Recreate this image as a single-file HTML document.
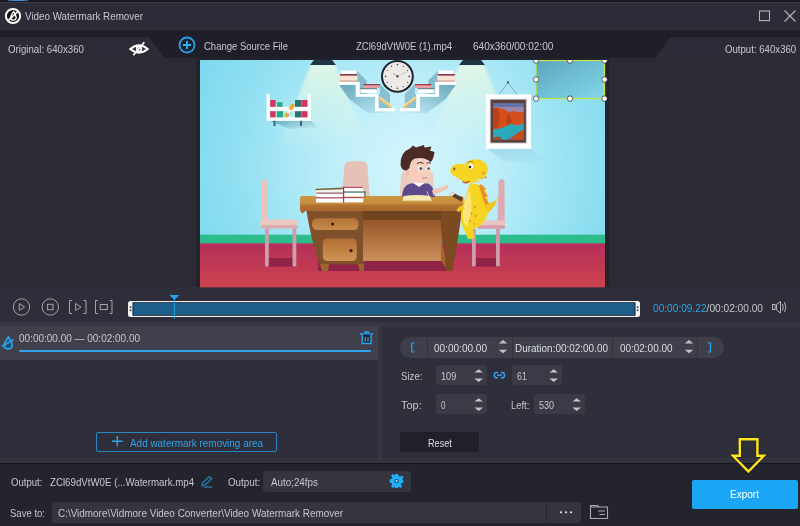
<!DOCTYPE html>
<html>
<head>
<meta charset="utf-8">
<title>Video Watermark Remover</title>
<style>
html,body{margin:0;padding:0;}
body{width:800px;height:526px;overflow:hidden;background:#2d2e38;font-family:"Liberation Sans",sans-serif;font-size:11px;color:#c6c7cf;position:relative;}
.abs{position:absolute;}
.t{position:absolute;white-space:nowrap;line-height:14px;height:14px;transform-origin:0 0;}
#topstrip{left:0;top:0;width:800px;height:3px;background:#191a21;}
#topblue{left:8px;top:0;width:20px;height:1px;background:linear-gradient(90deg,#2a5f96,#4a90d2 30%,#4a90d2 70%,#2a5f96);}
#topline{left:0;top:2px;width:800px;height:1px;background:#3a3b46;}
#titlebar{left:0;top:3px;width:800px;height:27px;background:#2b2c37;}
#header{left:0;top:30px;width:800px;height:28px;background:#1e1f28;}
#left{left:0;top:58px;width:200px;height:230px;background:#2a2b35;}
#right{left:605px;top:58px;width:195px;height:230px;background:#2a2b35;}
#videobg{left:196px;top:58px;width:413px;height:229px;background:#22232c;}
#controls{left:0;top:287px;width:800px;height:35px;background:#2d2e39;}
#band{left:0;top:322px;width:800px;height:5px;background:#353641;}
#band2{left:0;top:457px;width:800px;height:6px;background:#32333e;}
#lower{left:0;top:326.5px;width:800px;height:131px;background:#2e2f3a;}
#segrow{left:0;top:325.5px;width:377.5px;height:34px;background:#3f404c;}
#divider{left:377.5px;top:322px;width:4.5px;height:140px;background:#353641;}
#bottomline{left:0;top:462.5px;width:800px;height:1.5px;background:#14151b;}
#bottom{left:0;top:464px;width:800px;height:62px;background:#23242d;}
.box{position:absolute;background:#3a3b47;border-radius:3px;}
.bbox{position:absolute;background:#34353f;border-radius:3px;}
</style>
</head>
<body>
<div class="abs" id="topstrip"></div>
<div class="abs" id="topline"></div>
<div class="abs" id="topblue"></div>
<div class="abs" id="titlebar"></div>
<div class="abs" id="header"></div>
<div class="abs" id="left"></div>
<div class="abs" id="right"></div>
<div class="abs" id="videobg"></div>
<div class="abs" id="controls"></div>
<div class="abs" id="band"></div>
<div class="abs" id="band2"></div>
<div class="abs" id="lower"></div>
<div class="abs" id="segrow"></div>
<div class="abs" id="divider"></div>
<div class="abs" id="bottom"></div>
<div class="abs" id="bottomline"></div>

<div class="abs" style="left:19px;top:349.7px;width:352px;height:2.6px;background:#2ea3ea;border-radius:1px;"></div>

<!-- time range pill -->
<div class="abs" style="left:400px;top:336.5px;width:324px;height:21px;background:#3e3f4b;border-radius:10.5px;"></div>
<div class="abs" style="left:427px;top:336.5px;width:1px;height:21px;background:#30313b;"></div>
<div class="abs" style="left:512px;top:336.5px;width:1px;height:21px;background:#30313b;"></div>
<div class="abs" style="left:612px;top:336.5px;width:1px;height:21px;background:#30313b;"></div>
<div class="abs" style="left:697px;top:336.5px;width:1px;height:21px;background:#30313b;"></div>

<div class="box" style="left:436px;top:365px;width:51px;height:20px;"></div>
<div class="box" style="left:512px;top:365px;width:50px;height:20px;"></div>
<div class="box" style="left:436px;top:394px;width:51px;height:20px;"></div>
<div class="box" style="left:534px;top:394px;width:51px;height:20px;"></div>

<div class="abs" style="left:400px;top:432px;width:79px;height:20px;background:#1f2028;"></div>
<div class="abs" style="left:96px;top:432px;width:179px;height:18px;border:1px solid #2c86c4;border-radius:2px;"></div>

<div class="bbox" style="left:263px;top:471px;width:148px;height:21px;"></div>
<div class="bbox" style="left:52px;top:502px;width:494px;height:21px;border-radius:3px 0 0 3px;"></div>
<div class="bbox" style="left:547px;top:502px;width:34px;height:21px;border-radius:0 3px 3px 0;"></div>

<div class="abs" style="left:692px;top:480px;width:106px;height:29px;background:#1aa6f4;border-radius:2px;"></div>

<svg class="abs" style="left:200px;top:60px;overflow:visible;clip-path:inset(0px -6px -6px 0px);" width="405" height="227" viewBox="200 60 405 227">
<defs>
  <radialGradient id="wall" gradientUnits="userSpaceOnUse" cx="412" cy="165" r="230">
    <stop offset="0" stop-color="#d6f5fc"/>
    <stop offset="0.35" stop-color="#bdeef9"/>
    <stop offset="0.75" stop-color="#92e0f2"/>
    <stop offset="1" stop-color="#7fd9ee"/>
  </radialGradient>
  <linearGradient id="floor" x1="0" y1="243" x2="0" y2="287" gradientUnits="userSpaceOnUse">
    <stop offset="0" stop-color="#b42f5b"/>
    <stop offset="1" stop-color="#cc434c"/>
  </linearGradient>
  <linearGradient id="cone" x1="0" y1="65" x2="0" y2="150" gradientUnits="userSpaceOnUse">
    <stop offset="0" stop-color="#e2f7e6" stop-opacity="0.95"/>
    <stop offset="1" stop-color="#e4f8e8" stop-opacity="0"/>
  </linearGradient>
  <linearGradient id="shad" x1="0" y1="0" x2="1" y2="1">
    <stop offset="0" stop-color="#4f8fa4" stop-opacity="0.75"/>
    <stop offset="1" stop-color="#4f8fa4" stop-opacity="0"/>
  </linearGradient>
  <linearGradient id="shadL" x1="1" y1="0" x2="0" y2="1">
    <stop offset="0" stop-color="#4f8fa4" stop-opacity="0.75"/>
    <stop offset="1" stop-color="#4f8fa4" stop-opacity="0"/>
  </linearGradient>
  <linearGradient id="panel" x1="0" y1="221" x2="0" y2="261" gradientUnits="userSpaceOnUse">
    <stop offset="0" stop-color="#96572a"/>
    <stop offset="1" stop-color="#cc8f58"/>
  </linearGradient>
  <linearGradient id="desktop" x1="0" y1="196" x2="0" y2="211" gradientUnits="userSpaceOnUse">
    <stop offset="0" stop-color="#cd963f"/>
    <stop offset="0.52" stop-color="#c48b3a"/>
    <stop offset="0.62" stop-color="#b27230"/>
    <stop offset="1" stop-color="#a5672c"/>
  </linearGradient>
  <linearGradient id="sel" x1="0" y1="0" x2="1" y2="1">
    <stop offset="0" stop-color="#5aa6bc"/>
    <stop offset="0.6" stop-color="#74c4d9"/>
    <stop offset="1" stop-color="#86d6e9"/>
  </linearGradient>
  <linearGradient id="drw1" x1="0" y1="0" x2="0" y2="1"><stop offset="0" stop-color="#b37238"/><stop offset="1" stop-color="#c98b4a"/></linearGradient>
  <linearGradient id="drw2" x1="0" y1="0" x2="0" y2="1"><stop offset="0" stop-color="#b06e35"/><stop offset="1" stop-color="#cf9353"/></linearGradient>
  <filter id="b1" x="-20%" y="-20%" width="140%" height="140%"><feGaussianBlur stdDeviation="0.6"/></filter>
  <filter id="b3" x="-20%" y="-20%" width="140%" height="140%"><feGaussianBlur stdDeviation="1.1"/></filter>
  <filter id="b2" x="-20%" y="-20%" width="140%" height="140%"><feGaussianBlur stdDeviation="2"/></filter>
</defs>
<rect x="200" y="60" width="405" height="227" fill="url(#wall)"/>
<!-- light cones -->
<path d="M311 64 L335 64 L369 150 L277 150 Z" fill="url(#cone)" filter="url(#b3)"/>
<path d="M460 64 L484 64 L518 150 L426 150 Z" fill="url(#cone)" filter="url(#b3)"/>
<!-- lamps -->
<path d="M314 60 H332 L336 65 H310 Z" fill="#1f3644"/>
<path d="M463 60 H481 L485 65 H459 Z" fill="#1f3644"/>

<!-- small shelf -->
<path d="M270 121 H311 L318 127.5 L290 129 Z" fill="url(#shad)" opacity="0.85"/>
<rect x="273.5" y="120" width="2" height="6" fill="#3c6476"/>
<rect x="300" y="120" width="2" height="6" fill="#3c6476"/>
<path d="M266.5 94 H269.8 V117.3 H307.5 V94 H310.8 V120.8 H266.5 Z" fill="#fff"/>
<rect x="269" y="106.8" width="39" height="4.4" fill="#fff"/>
<rect x="270.2" y="100" width="5.4" height="6.8" fill="#d8335e"/>
<rect x="277" y="102.3" width="5.5" height="4.5" fill="#27a97f"/>
<rect x="295" y="100" width="6.5" height="6.8" fill="#2a7566"/>
<rect x="301.5" y="100" width="6" height="6.8" fill="#d8335e"/>
<rect x="270.2" y="111.2" width="5.4" height="6.2" fill="#d8335e"/>
<rect x="277" y="111.2" width="6" height="6.2" fill="#27a97f"/>
<rect x="295" y="111.2" width="6.5" height="6.2" fill="#2a7566"/>
<rect x="301.5" y="111.2" width="6" height="6.2" fill="#d8335e"/>
<path d="M284 116.5 L292 103 L295 105 L287.5 117.4 Z" fill="#f0a62c"/>
<path d="M286.5 112.5 L288.8 108.6 L291.6 110.4 L289.3 114.3 Z" fill="#fff"/>

<!-- stair shelves: shadows -->
<g>
<path d="M339 84.8 H356 V96.8 H375 V111.3 H395 L396 113 L368 113 L349 99 Z" fill="url(#shad)"/>
<path d="M357 71 L366.5 80.5 V94 H359.6 V82 H357 Z" fill="#5f9bb0" opacity="0.6"/>
<path d="M380 84 L390 94 V108.2 H378.5 V94 H380 Z" fill="#5f9bb0" opacity="0.55"/>
<path d="M338.5 82 H359.6 V94 H378.5 V108.2 H395 V111.3 H375 V96.8 H355.7 V84.8 H338.5 Z" fill="#fff"/>
</g>
<g transform="translate(794.8 0) scale(-1 1)">
<path d="M339 84.8 H356 V96.8 H375 V111.3 H395 L396 113 L368 113 L349 99 Z" fill="url(#shad)"/>
<path d="M357 71 L366.5 80.5 V94 H359.6 V82 H357 Z" fill="#5f9bb0" opacity="0.6"/>
<path d="M380 84 L390 94 V108.2 H378.5 V94 H380 Z" fill="#5f9bb0" opacity="0.55"/>
<path d="M338.5 82 H359.6 V94 H378.5 V108.2 H395 V111.3 H375 V96.8 H355.7 V84.8 H338.5 Z" fill="#fff"/>
</g>
<!-- books left top -->
<rect x="341" y="70.6" width="15.5" height="3.4" fill="#fff"/>
<rect x="340" y="74" width="17" height="1.8" fill="#8e3a45"/>
<rect x="340" y="75.8" width="17.5" height="5" fill="#fbe3d2"/>
<rect x="340" y="80.3" width="17.5" height="1.3" fill="#e9a58a"/>
<!-- books left 2nd -->
<rect x="363.5" y="84" width="16.5" height="4" fill="#e9a0a8"/>
<rect x="363.5" y="84" width="16.5" height="1.3" fill="#9a3d4d"/>
<rect x="360.5" y="89" width="16" height="4" fill="#fff"/>
<rect x="360.5" y="88.2" width="16.5" height="1" fill="#5a6f78"/>
<!-- leaning book left -->
<path d="M378 98.5 L380 96.5 L392.5 106 L390.5 108.2 Z" fill="#f7e3a1"/>
<path d="M378 98.5 L379 97.5 L391.5 107.1 L390.5 108.2 Z" fill="#e8b96a"/>
<!-- books right top -->
<rect x="438.3" y="70.6" width="15.5" height="3.4" fill="#fff"/>
<rect x="437.8" y="74" width="17" height="1.8" fill="#8e3a45"/>
<rect x="437.3" y="75.8" width="17.5" height="5" fill="#fbe3d2"/>
<rect x="437.3" y="80.3" width="17.5" height="1.3" fill="#e9a58a"/>
<!-- books right 2nd -->
<rect x="414.8" y="84" width="16.5" height="4" fill="#e9a0a8"/>
<rect x="414.8" y="84" width="16.5" height="1.3" fill="#9a3d4d"/>
<rect x="418.3" y="89" width="16" height="4" fill="#fff"/>
<rect x="417.8" y="88.2" width="16.5" height="1" fill="#5a6f78"/>
<path d="M416.8 98.5 L414.8 96.5 L402.3 106 L404.3 108.2 Z" fill="#f7e3a1"/>
<path d="M416.8 98.5 L415.8 97.5 L403.3 107.1 L404.3 108.2 Z" fill="#e8b96a"/>

<!-- clock -->
<circle cx="397.4" cy="76.4" r="15.4" fill="#ede9e6" stroke="#1d2530" stroke-width="2"/>
<g fill="#3a3f48">
<circle cx="397.4" cy="64.6" r="0.8"/><circle cx="397.4" cy="88.2" r="0.8"/><circle cx="385.6" cy="76.4" r="0.8"/><circle cx="409.2" cy="76.4" r="0.8"/>
<circle cx="403.3" cy="66.2" r="0.6"/><circle cx="407.6" cy="70.5" r="0.6"/><circle cx="407.6" cy="82.3" r="0.6"/><circle cx="403.3" cy="86.6" r="0.6"/>
<circle cx="391.5" cy="66.2" r="0.6"/><circle cx="387.2" cy="70.5" r="0.6"/><circle cx="387.2" cy="82.3" r="0.6"/><circle cx="391.5" cy="86.6" r="0.6"/>
</g>
<path d="M397.4 76.4 L408 71.3" stroke="#c9c4c2" stroke-width="0.9"/>
<path d="M397.4 76.4 L393 73.6" stroke="#b5b0ae" stroke-width="1.1"/>
<circle cx="397.4" cy="76.4" r="1.1" fill="#2a2f38"/>

<!-- picture -->
<path d="M488 149 H531 L545 162 L504 162 Z" fill="url(#shad)" opacity="0.3"/>
<path d="M498.8 95 L508 82.5 L517.2 95" fill="none" stroke="#6b8b98" stroke-width="0.7"/>
<circle cx="508" cy="82.3" r="1.1" fill="#34424c"/>
<rect x="486" y="94.4" width="45" height="54.4" fill="#fff"/>
<rect x="489.8" y="98.8" width="37" height="44.6" fill="#8d8590" opacity="0.55" filter="url(#b1)"/>
<rect x="490.8" y="99.8" width="35" height="42.8" fill="#5c3f3a" filter="url(#b1)"/>
<g filter="url(#b1)">
<rect x="493.2" y="103.2" width="30.4" height="36.6" fill="#6573ac"/>
<rect x="493.2" y="107" width="30.4" height="5" fill="#9d86ac"/>
<path d="M493.2 109 L499 107.5 L504 109.5 L509 112 L514 111 L519 112.5 L523.6 111.5 V129 L493.2 129 Z" fill="#d4501f"/>
<path d="M493.2 108 L497 107.5 L500 114 L498 127 L493.2 129 Z" fill="#b9431c"/>
<path d="M508 112 L512 120 L510 127 L506 122 Z" fill="#b9431c"/>
<path d="M493.2 130 L503 127.5 L511 124 L518 125.5 L523.6 123 V131 L512 137 L505 139.8 H493.2 Z" fill="#2ba9ba"/>
<path d="M509 139.8 L516 134 L523.6 129.5 V139.8 Z" fill="#c8481f"/>
<path d="M493.2 137.5 L499 136.5 L503 139.8 H493.2 Z" fill="#a94524"/>
</g>

<!-- floor -->
<rect x="200" y="234.7" width="405" height="9" fill="#2cbd8d"/>
<rect x="200" y="243.3" width="405" height="44" fill="url(#floor)"/>

<!-- left chair -->
<rect x="266" y="258" width="30" height="8.5" fill="#8f2348"/>
<path d="M261.2 181 Q264 177 266.8 181 L268 221 H261 Z" fill="#e7c3ba"/>
<path d="M260.5 222 Q260.5 219.5 263 219.5 H295 Q298 219.5 298 223 V225 Q298 228.5 295 228.5 H263 Q260.5 228.5 260.5 226 Z" fill="#ecc9c0"/>
<rect x="261" y="225" width="37" height="3.5" rx="1.5" fill="#d9aeb0"/>
<rect x="265" y="228.5" width="3.8" height="38" fill="#d09bab"/>
<rect x="292.5" y="228.5" width="3.8" height="38" fill="#d09bab"/>

<!-- right chair -->
<rect x="474" y="258" width="25" height="8.5" fill="#8f2348"/>
<path d="M498.6 181 Q501.5 177 504.5 181 L504.8 222 H497.5 Z" fill="#dcaab2"/>
<path d="M477.5 223.5 Q477.5 220.5 480.5 220.5 H502 Q505 220.5 505 223.5 V225.5 Q505 228.8 502 228.8 H480.5 Q477.5 228.8 477.5 225.5 Z" fill="#e9c4c2"/>
<rect x="477.5" y="225.3" width="27.5" height="3.5" rx="1.5" fill="#d3a0ac"/>
<rect x="472" y="228.8" width="3.8" height="37.5" fill="#d09bab"/>
<rect x="496" y="228.8" width="3.8" height="37.5" fill="#d09bab"/>

<!-- chair behind desk -->
<path d="M341.3 198 L344.5 166 Q345 161.3 350 161.3 H362 Q367 161.3 367.3 166 L369.8 198 Z" fill="#e5c2b8"/>
<!-- boy chair -->
<path d="M399.5 198 L401 176 Q401.5 171 406 171 H428 Q433 171 433 176 L434 198 Z" fill="#e9cdbf"/>

<!-- desk shadow -->
<rect x="318" y="260" width="128" height="11" fill="#8f2348"/>
<!-- desk body -->
<path d="M306.5 211 H364 V264.5 H319.5 Q311 240 306.5 211 Z" fill="#80502a"/>
<rect x="363" y="210.5" width="80" height="10" fill="#70431f"/>
<rect x="363" y="220" width="78.5" height="41" fill="url(#panel)"/>
<rect x="312" y="218.3" width="46.5" height="11.8" rx="5" fill="url(#drw1)"/>
<rect x="322.8" y="238.4" width="34" height="22.6" rx="4.5" fill="url(#drw2)"/>
<circle cx="332.6" cy="224" r="1.5" fill="#3a1418"/>
<circle cx="351" cy="250.6" r="1.6" fill="#3a1418"/>
<path d="M320 264 H329 L328 271 H322 Z" fill="#9c642e"/>
<path d="M358 264 H364 V271 H359.5 Z" fill="#9c642e"/>
<path d="M441 211 H462 Q458 240 452.5 270.8 H445.5 Q447 262 444 250 Q440 235 441 211 Z" fill="#7c4a21"/>
<path d="M441 221 Q440 240 444 252 Q446 262 445.5 268 L441.5 261 Z" fill="#a4662e"/>
<!-- desk top -->
<path d="M302 196 H461 Q463.5 196 463.5 198.5 V208.5 Q463.5 211 461 211 H305 L303 213.5 Q300 212.5 300 208.5 V198.5 Q300 196 302 196 Z" fill="url(#desktop)"/>

<!-- books on desk -->
<rect x="316" y="188.6" width="27.5" height="4.2" fill="#f6f2ea"/>
<path d="M315.5 188.8 L343.5 187.6 V189.2 L315.5 190.2 Z" fill="#6f6a45"/>
<rect x="316.5" y="193.2" width="27.5" height="4.4" fill="#fff"/>
<rect x="316.5" y="192.6" width="27.5" height="1" fill="#9b3246"/>
<rect x="316" y="198" width="28" height="4.6" fill="#fff"/>
<rect x="316" y="197.4" width="28" height="1" fill="#9b3246"/>
<rect x="343.8" y="187.4" width="19" height="4" fill="#fff"/>
<rect x="343.8" y="186.8" width="19" height="1.1" fill="#c2405a"/>
<rect x="344" y="192.4" width="21" height="4.2" fill="#fff"/>
<rect x="344" y="191.5" width="21.5" height="1.1" fill="#3d6f66"/>
<rect x="364.2" y="191.5" width="1.3" height="5.4" fill="#3d6f66"/>
<rect x="343.8" y="198" width="19.5" height="4.4" fill="#fff"/>
<rect x="343.8" y="197" width="19.5" height="1.1" fill="#c2405a"/>
<rect x="343" y="186.8" width="1.2" height="15.8" fill="#b03050"/>

<!-- boy -->
<path d="M402 197 Q402 186 410 183.5 L428 183.5 Q434 186 435 197 Z" fill="#5c4a8c"/>
<path d="M432 190 L444.5 186.5 L447.5 184.5 L449 186.5 L446 189.5 L433.5 195.5 Z" fill="#f3c2b0"/>
<path d="M414 183.5 L419 187 L424 183.5 L422 181 H416 Z" fill="#fff"/>
<ellipse cx="419.5" cy="170.5" rx="11.2" ry="12.6" fill="#f8cdbc"/>
<ellipse cx="407.5" cy="172.5" rx="2.2" ry="3.2" fill="#f3bfae"/>
<path d="M400.5 165 Q400 152 410 148.5 L413 145.5 L416 147.5 L424 145 L424.5 147.5 L431.5 146.5 L430 150.5 L434.5 152 Q433.5 160 430.5 162 Q424 156.5 415 158.5 Q410 160.5 409.5 168 L406.5 170.5 Q401.5 170.5 400.5 165 Z" fill="#4b2b24"/>
<ellipse cx="420.3" cy="168.3" rx="2.3" ry="2.5" fill="#fff"/>
<ellipse cx="428.3" cy="168.3" rx="1.9" ry="2.4" fill="#fff"/>
<circle cx="420.8" cy="168.6" r="1.5" fill="#3c5a66"/>
<circle cx="428.6" cy="168.6" r="1.4" fill="#3c5a66"/>
<path d="M417 163.5 Q420 161.5 423.5 163.3" stroke="#4b2b24" stroke-width="1" fill="none"/>
<path d="M426.5 163.3 Q428.5 162 431 163.3" stroke="#4b2b24" stroke-width="1" fill="none"/>
<path d="M422 177.8 Q424.5 178.8 427 177.5" stroke="#b5705f" stroke-width="0.8" fill="none"/>
<!-- paper -->
<path d="M403.5 196 Q417 194 430 196 L431.5 200.8 H402.5 Z" fill="#f6eab0"/>
<path d="M402.5 200 H431.5 V201.3 H402.5 Z" fill="#e3cf86"/>
<path d="M427 191.5 L429 196.5" stroke="#d8c9a8" stroke-width="1"/>

<!-- tablet/book on desk right -->
<path d="M449.5 195 L452.5 192.3 L463 198 L461.5 201.5 Z" fill="#5a3a30"/>
<path d="M449.5 195 L452.5 192.3 L455 193.6 L452 196.5 Z" fill="#e8ddd8"/>

<!-- dino -->
<path d="M486 203 Q492 204 497.5 198.5 Q495 208 487 213.5 Z" fill="#f3c51c"/>
<path d="M470 183 Q466 196 462.5 206 Q459 218 463 228 L468 238.5 Q472 240 474.5 237.5 L473 229 Q485 226 488.5 212 Q489 198 484 186 Z" fill="#f6d422"/>
<path d="M469 190 Q463 203 462.8 214 Q463 224 467 226 Q472 215 471.5 203 Q471 195 469 190 Z" fill="#f9e678"/>
<path d="M481 184 L486 189 L483.5 190.5 L488 196 L485 197 L489 203.5 L486 204.5 L488.5 211 Q484 204 482 196 Q480.5 190 479 186 Z" fill="#e98f2c"/>
<path d="M462 205 Q458 207 456.5 211 L459.5 212 Q461 209 464 208.5 Z" fill="#f0c41c"/>
<ellipse cx="475.5" cy="169.5" rx="12.4" ry="10.3" fill="#f6d422"/>
<ellipse cx="459.5" cy="170.5" rx="9.3" ry="6.8" fill="#f6d422"/>
<path d="M455 176 Q466 186 480 181 Q472 179 466 176 Z" fill="#f6d422"/>
<path d="M462.5 181.8 Q466 183.2 469.5 181.5" stroke="#7a3b18" stroke-width="1" fill="none"/>
<path d="M463 182 Q466 185 469 182 Z" fill="#d9541e"/>
<ellipse cx="470.8" cy="166.3" rx="2.2" ry="2.8" fill="#fff" transform="rotate(-20 470.8 166.3)"/>
<circle cx="470" cy="167" r="1.3" fill="#3b2418"/>
<ellipse cx="454.3" cy="169" rx="1.1" ry="1.4" fill="#9a5a18"/>
<path d="M467 162.5 Q470 160.5 473.5 162" stroke="#b9781a" stroke-width="0.9" fill="none"/>
<circle cx="483.5" cy="173" r="1.6" fill="#ea9a2c"/><circle cx="485.5" cy="177.5" r="1.3" fill="#ea9a2c"/><circle cx="482" cy="178.5" r="1" fill="#ea9a2c"/>
<circle cx="475" cy="207" r="0.9" fill="#e08a24"/><circle cx="471.5" cy="213.5" r="0.9" fill="#e08a24"/><circle cx="475.5" cy="216" r="0.9" fill="#e08a24"/><circle cx="470" cy="221" r="0.9" fill="#e08a24"/><circle cx="474" cy="224" r="0.8" fill="#e08a24"/>

<!-- selection box -->
<rect x="536" y="60" width="68.5" height="38.6" fill="url(#sel)"/>
<rect x="536" y="60.5" width="68.5" height="38.1" fill="none" stroke="#c6e44c" stroke-width="1.3"/>
<g fill="#fff" stroke="#2a2a2a" stroke-width="0.7">
<circle cx="536" cy="60.5" r="2.7"/><circle cx="570" cy="60.5" r="2.7"/><circle cx="604.5" cy="60.5" r="2.7"/>
<circle cx="536" cy="79.5" r="2.7"/><circle cx="604.5" cy="79.5" r="2.7"/>
<circle cx="536" cy="98.6" r="2.7"/><circle cx="570" cy="98.6" r="2.7"/><circle cx="604.5" cy="98.6" r="2.7"/>
</g>
</svg>


<!-- chrome icons overlay -->
<svg class="abs" style="left:0;top:0" width="800" height="526" viewBox="0 0 800 526" fill="none">
  <!-- header tabs -->
  <path d="M0 37 H149 L165 58 H0 Z" fill="#2b2c37"/>
  <path d="M800 37 H670 L655 58 H800 Z" fill="#2b2c37"/>
  <!-- title icon -->
  <circle cx="13" cy="16" r="7.1" fill="#121318" stroke="#fff" stroke-width="2"/>
  <path d="M13.6 11.6 Q10.6 15.8 10.7 17.8 Q11 20.2 13.5 20.2 Q16 20.2 16.2 17.8 Q16.2 15.8 13.6 11.6 Z" stroke="#fff" stroke-width="1.3"/>
  <path d="M7.8 20.8 L18.4 11" stroke="#fff" stroke-width="1.6"/>
  <!-- window buttons -->
  <rect x="759.5" y="11" width="10" height="9.6" stroke="#b4b5bd" stroke-width="1.1"/>
  <path d="M784.5 10.5 L795.5 21.5 M795.5 10.5 L784.5 21.5" stroke="#b4b5bd" stroke-width="1.1"/>
  <!-- eye icon -->
  <path d="M130.3 49 Q139 41.8 147.7 49 Q139 56.2 130.3 49 Z" stroke="#fff" stroke-width="2"/>
  <circle cx="139" cy="49" r="2.3" stroke="#fff" stroke-width="1.7"/>
  <path d="M133.3 55.3 L144.3 42.3" stroke="#fff" stroke-width="1.7"/>
  <!-- plus circle -->
  <circle cx="187" cy="45" r="7.5" fill="#16222e" stroke="#2a9fe6" stroke-width="1.8"/>
  <path d="M183 45 H191 M187 41 V49" stroke="#2fb2f5" stroke-width="1.8"/>
  <!-- play controls -->
  <g stroke="#a3a4ae" stroke-width="1">
  <circle cx="21.5" cy="307" r="8.2"/>
  <path d="M19.3 303.5 L24.6 307 L19.3 310.5 Z"/>
  <circle cx="50.3" cy="307" r="8.2"/>
  <rect x="47.6" y="304.3" width="5.4" height="5.4"/>
  <path d="M72 300.5 H69.5 V313.5 H72 M83.5 300.5 H86 V313.5 H83.5"/>
  <path d="M75.6 303.5 L81 307 L75.6 310.5 Z"/>
  <path d="M98 300.5 H95.5 V313.5 H98 M109.5 300.5 H112 V313.5 H109.5"/>
  <rect x="100.3" y="304.5" width="7" height="5"/>
  </g>
  <!-- timeline -->
  <rect x="128" y="301" width="512" height="16" rx="2.5" fill="#f2f2f4"/>
  <rect x="132.5" y="302.2" width="503" height="13.6" fill="#0d1a24"/>
  <rect x="133.5" y="303" width="501" height="12" fill="#1d5f88"/>
  <rect x="129.8" y="306.5" width="1.6" height="1.6" fill="#333"/><rect x="129.8" y="309.5" width="1.6" height="1.6" fill="#333"/>
  <rect x="636.8" y="306.5" width="1.6" height="1.6" fill="#333"/><rect x="636.8" y="309.5" width="1.6" height="1.6" fill="#333"/>
  <path d="M169.4 295 H179.4 L174.4 300 Z" fill="#2aa0e6"/>
  <path d="M174.4 299 V319" stroke="#2aa0e6" stroke-width="1"/>
  <!-- volume -->
  <g stroke="#b4b5bd" stroke-width="1">
  <rect x="772.5" y="304.5" width="2.6" height="5"/>
  <path d="M776.5 304.5 L780.5 301.5 V313 L776.5 310 Z"/>
  <path d="M782.5 304 Q784 307.2 782.5 310.5 M784.5 302.3 Q787.2 307.2 784.5 312.2"/>
  </g>
  <!-- watermark segment icon -->
  <path d="M8.4 337 Q4 343 4.2 345.6 Q4.6 348.8 8.2 348.8 Q11.8 348.8 12.2 345.6 Q12.3 343 8.4 337 Z" stroke="#2ea3ea" stroke-width="1.7" fill="#1d4a6c"/>
  <path d="M1.8 346.5 L13.6 339.5" stroke="#2ea3ea" stroke-width="1.6"/>
  <!-- trash -->
  <g stroke="#2ea3ea" stroke-width="1.5">
  <path d="M360 334 H373"/>
  <path d="M365 333.6 V332 H368.3 V333.6"/>
  <path d="M362.3 334.5 V343.6 H371 V334.5" fill="#17293a"/>
  </g>
  <path d="M365.2 337 V341.5 M368 337 V341.5" stroke="#9fb9c9" stroke-width="0.9"/>
  <!-- brackets -->
  <path d="M414.5 343 H411.8 V352 H414.5" stroke="#2ea3ea" stroke-width="1.2"/>
  <path d="M707.8 343 H710.5 V352 H707.8" stroke="#2ea3ea" stroke-width="1.2"/>
  <!-- spinners -->
  <g fill="#c3c4cc">
  <path d="M498.7 343.5 H507.3 L503 340 Z M498.7 349.8 H507.3 L503 353.3 Z"/>
  <path d="M684.7 343.5 H693.3 L689 340 Z M684.7 349.8 H693.3 L689 353.3 Z"/>
  <path d="M474.4 372.6 H483 L478.7 369.2 Z M474.4 378.6 H483 L478.7 382 Z"/>
  <path d="M549.4 372.6 H558 L553.7 369.2 Z M549.4 378.6 H558 L553.7 382 Z"/>
  <path d="M474.4 401.6 H483 L478.7 398.2 Z M474.4 407.6 H483 L478.7 411 Z"/>
  <path d="M572.4 401.6 H581 L576.7 398.2 Z M572.4 407.6 H581 L576.7 411 Z"/>
  </g>
  <!-- link icon -->
  <g stroke="#2ea3ea" stroke-width="1.5">
  <path d="M498 372.6 H496.6 Q494.3 372.6 494.3 375.2 Q494.3 377.8 496.6 377.8 H498"/>
  <path d="M500.8 372.6 H502.2 Q504.5 372.6 504.5 375.2 Q504.5 377.8 502.2 377.8 H500.8"/>
  <path d="M497 375.2 H502"/>
  </g>
  <!-- add plus -->
  <path d="M112 441.3 H122.6 M117.3 436 V446.6" stroke="#2ea3ea" stroke-width="1.5"/>
  <!-- pencil -->
  <g stroke="#2a86b8" stroke-width="1.2">
  <path d="M202 485.5 L202.8 482.6 L209.3 476.6 L211.6 478.8 L205 485 Z"/>
  <path d="M203.5 487 H212.3"/>
  </g>
  <!-- gear -->
  <g transform="translate(396.6 481)">
  <path d="M-1.5 -7 H1.5 L2 -5 L3.6 -4.3 L5.4 -5.6 L7 -3.8 L5.6 -2 L6.3 -0.6 L6.9 0 L6.9 1.5 L5 2 L4.3 3.6 L5.6 5.4 L3.8 7 L2 5.6 L1.5 6.9 H-1.5 L-2 5.6 L-3.8 7 L-5.6 5.4 L-4.3 3.6 L-5 2 L-6.9 1.5 V-1.5 L-5 -2 L-4.3 -3.6 L-5.6 -5.4 L-3.8 -7 L-2 -5.6 Z" fill="#1fb0ff"/>
  <circle r="5.2" fill="#1fb0ff"/>
  <circle r="2.2" fill="#0f5d94"/><circle r="0.9" fill="#e8f6ff"/>
  </g>
  <!-- dots -->
  <circle cx="561" cy="512.3" r="1.1" fill="#e3e4ea"/><circle cx="566" cy="512.3" r="1.1" fill="#e3e4ea"/><circle cx="571" cy="512.3" r="1.1" fill="#e3e4ea"/>
  <!-- folder -->
  <g stroke="#a9aab3" stroke-width="1.1">
  <path d="M590.5 507 V505.5 H597.5 L599 507 H607.5 V518.5 H590.5 V507 H599"/>
  <path d="M598 511 H605 M599.5 514.5 H605"/>
  </g>
  <!-- yellow arrow -->
  <path d="M739.8 439.2 H757.4 V455.8 H763.8 L748.4 471.6 L733 455.8 H739.8 Z" stroke="#1a1b22" stroke-opacity="0.5" stroke-width="4"/>
  <path d="M739.8 439.2 H757.4 V455.8 H763.8 L748.4 471.6 L733 455.8 H739.8 Z" stroke="#ffe61e" stroke-width="2.4" stroke-linejoin="miter"/>

</svg>

<div class="t" style="left:25.0px;top:9.4px;color:#c6c7cf;transform:scaleX(0.8936);">Video Watermark Remover</div>
<div class="t" style="left:8.0px;top:41.9px;color:#c6c7cf;transform:scaleX(0.8813);">Original: 640x360</div>
<div class="t" style="left:204.0px;top:38.7px;color:#c6c7cf;transform:scaleX(0.8639);">Change Source File</div>
<div class="t" style="left:356.0px;top:38.7px;color:#c6c7cf;transform:scaleX(0.8676);">ZCl69dVtW0E (1).mp4</div>
<div class="t" style="left:473.0px;top:38.7px;color:#c6c7cf;transform:scaleX(0.9115);">640x360/00:02:00</div>
<div class="t" style="left:725.0px;top:41.9px;color:#c6c7cf;transform:scaleX(0.8753);">Output: 640x360</div>
<div class="t" style="left:653.0px;top:300.7px;color:#c6c7cf;transform:scaleX(0.9221);"><span style="color:#2ea3ea">00:00:09.22</span>/00:02:00.00</div>
<div class="t" style="left:19.0px;top:330.9px;color:#c6c7cf;transform:scaleX(0.9074);">00:00:00.00 — 00:02:00.00</div>
<div class="t" style="left:434.0px;top:340.7px;color:#dedfe5;transform:scaleX(0.9118);">00:00:00.00</div>
<div class="t" style="left:515.0px;top:340.7px;color:#dedfe5;transform:scaleX(0.9051);">Duration:00:02:00.00</div>
<div class="t" style="left:620.0px;top:340.7px;color:#dedfe5;transform:scaleX(0.9032);">00:02:00.00</div>
<div class="t" style="left:400.5px;top:369.4px;color:#c6c7cf;transform:scaleX(0.8787);">Size:</div>
<div class="t" style="left:441.0px;top:369.4px;color:#c6c7cf;transform:scaleX(0.8334);">109</div>
<div class="t" style="left:516.5px;top:369.4px;color:#c6c7cf;transform:scaleX(0.8000);">61</div>
<div class="t" style="left:400.5px;top:397.9px;color:#c6c7cf;transform:scaleX(1.0002);">Top:</div>
<div class="t" style="left:441.0px;top:397.9px;color:#c6c7cf;transform:scaleX(0.7347);">0</div>
<div class="t" style="left:510.5px;top:397.9px;color:#c6c7cf;transform:scaleX(0.8549);">Left:</div>
<div class="t" style="left:539.3px;top:397.9px;color:#c6c7cf;transform:scaleX(0.8170);">530</div>
<div class="t" style="left:427.5px;top:435.7px;color:#dedfe5;transform:scaleX(0.8278);">Reset</div>
<div class="t" style="left:130.0px;top:435.9px;color:#2ea3ea;transform:scaleX(0.9027);">Add watermark removing area</div>
<div class="t" style="left:11.0px;top:474.7px;color:#c6c7cf;transform:scaleX(0.8703);">Output:</div>
<div class="t" style="left:50.4px;top:474.7px;color:#c6c7cf;transform:scaleX(0.8819);">ZCl69dVtW0E (...Watermark.mp4</div>
<div class="t" style="left:227.6px;top:474.7px;color:#c6c7cf;transform:scaleX(0.8897);">Output:</div>
<div class="t" style="left:270.8px;top:474.7px;color:#c6c7cf;transform:scaleX(0.8917);">Auto;24fps</div>
<div class="t" style="left:10.0px;top:505.7px;color:#c6c7cf;transform:scaleX(0.8672);">Save to:</div>
<div class="t" style="left:58.0px;top:505.7px;color:#c6c7cf;transform:scaleX(0.9017);">C:\Vidmore\Vidmore Video Converter\Video Watermark Remover</div>
<div class="t" style="left:729.5px;top:487.4px;color:#ffffff;transform:scaleX(0.9120);">Export</div>

</body>
</html>
